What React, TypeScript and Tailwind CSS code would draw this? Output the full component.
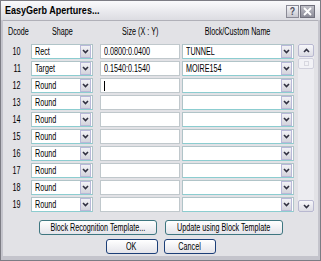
import React from "react";

const F = { fontFamily: '"Liberation Sans", Arial, sans-serif' };

function T({ children, c = "origin-left", s = "scale-x-[0.72]" }: { children: React.ReactNode; c?: string; s?: string }) {
  return <span className={`inline-block whitespace-nowrap ${s} ${c}`}>{children}</span>;
}

function Chevron({ up = false }: { up?: boolean }) {
  return (
    <svg width="7" height="5" viewBox="0 0 7 5">
      <path d={up ? "M1 4 L3.5 1.5 L6 4" : "M1 1 L3.5 3.5 L6 1"} fill="none" stroke="#303040" strokeWidth="1.6" />
    </svg>
  );
}

function ArrowBtn() {
  return (
    <div className="w-[11px] h-[13px] my-auto mr-px border border-[#b8b8d8] bg-gradient-to-b from-[#f2f2f6] to-[#d4d4dc] flex items-center justify-center">
      <Chevron />
    </div>
  );
}

function Combo({ w, text }: { w: string; text: string }) {
  return (
    <div className={`${w} h-[15px] bg-white border border-[#b0c4c8] border-b-[#8ccdd0] flex items-center`}>
      <div className="flex-1 pl-[3px] text-[10px] leading-none overflow-hidden">
        <T>{text}</T>
      </div>
      <ArrowBtn />
    </div>
  );
}

const rows = [
  { d: "10", shape: "Rect", size: "0.0800:0.0400", name: "TUNNEL" },
  { d: "11", shape: "Target", size: "0.1540:0.1540", name: "MOIRE154" },
  { d: "12", shape: "Round", size: "", name: "", caret: true },
  { d: "13", shape: "Round", size: "", name: "" },
  { d: "14", shape: "Round", size: "", name: "" },
  { d: "15", shape: "Round", size: "", name: "" },
  { d: "16", shape: "Round", size: "", name: "" },
  { d: "17", shape: "Round", size: "", name: "" },
  { d: "18", shape: "Round", size: "", name: "" },
  { d: "19", shape: "Round", size: "", name: "" },
];

function Btn({ w, children, def = false }: { w: string; children: React.ReactNode; def?: boolean }) {
  return (
    <div
      className={`${w} h-[15px] rounded-[3px] border ${def ? "border-[#1c3f78]" : "border-[#3e7680]"} bg-gradient-to-b from-[#ffffff] to-[#e4e4ea] flex items-center justify-center text-[10px] leading-none text-black`}
    >
      <T c="origin-center">{children}</T>
    </div>
  );
}

export default function App() {
  return (
    <div style={F} className="w-[321px] h-[261px] bg-[#7c7c84] p-px">
      <div className="w-full h-full bg-[#c4c4cc] px-[2px] pb-[4px] flex flex-col">
        <div className="h-[19px] flex items-center bg-gradient-to-b from-[#fafafc] to-[#dcdce2] -mx-[2px] px-[4px]">
          <div className="flex-1 text-[11px] font-bold leading-none text-black">
            <T s="scale-x-[0.82]">EasyGerb Apertures...</T>
          </div>
          <div className="flex gap-px mr-[1px] mt-[2px]">
            <div className="w-[13px] h-[13px] border border-[#8a8a96] bg-gradient-to-b from-[#f4f4f8] to-[#c8c8d0] flex items-center justify-center text-[11px] font-bold leading-none text-[#505060]">
              <T c="origin-center" s="scale-x-[0.8]">?</T>
            </div>
            <div className="w-[15px] h-[13px] border border-[#70707c] bg-gradient-to-b from-[#c0c0c8] to-[#8c8c98] flex items-center justify-center">
              <svg width="9" height="9" viewBox="0 0 9 9">
                <path d="M1 1 L8 8 M8 1 L1 8" stroke="#ffffff" strokeWidth="1.8" />
              </svg>
            </div>
          </div>
        </div>
        <div className="flex-1 bg-[#e2e2e6] border-t border-[#b0b0b8] flex flex-col text-black">
          <div className="h-[14px] mt-[4px] flex items-center text-[10px] leading-none">
            <div className="w-[28px] pl-[5px]"><T>Dcode</T></div>
            <div className="w-[62px] flex justify-center"><T c="origin-center">Shape</T></div>
            <div className="w-[80px] ml-[7px] flex justify-center"><T c="origin-center">Size (X : Y)</T></div>
            <div className="w-[112px] ml-[2px] flex justify-center"><T c="origin-center">Block/Custom Name</T></div>
          </div>
          <div className="flex mt-[5px]">
            <div className="flex flex-col gap-[2px]">
              {rows.map((r) => (
                <div key={r.d} className="flex h-[15px] items-center">
                  <div className="w-[28px] text-[10px] leading-none flex justify-center">
                    <T c="origin-center">{r.d}</T>
                  </div>
                  <Combo w="w-[62px]" text={r.shape} />
                  <div className="w-[80px] ml-[7px] h-[15px] bg-white border border-[#c0c8cc] flex items-center pl-[3px] text-[10px] leading-none">
                    {r.caret ? <div className="w-px h-[10px] bg-black" /> : <T>{r.size}</T>}
                  </div>
                  <div className="ml-[2px]">
                    <Combo w="w-[112px]" text={r.name} />
                  </div>
                </div>
              ))}
            </div>
            <div className="ml-[4px] w-[16px] h-[168px] bg-[#ececf0] flex flex-col">
              <div className="w-[16px] h-[13px] border border-[#b8b8d0] rounded-[2px] bg-gradient-to-b from-[#f6f6fa] to-[#dcdce4] flex items-center justify-center">
                <Chevron up />
              </div>
              <div className="mt-[1px] w-[16px] h-[11px] border border-[#d0d0dc] rounded-[2px] bg-[#f2f2f6] flex items-center justify-center">
                <div className="w-[5px] h-[5px] border border-[#d8d8e0]" />
              </div>
              <div className="flex-1" />
              <div className="w-[16px] h-[12px] border border-[#b8b8d0] rounded-[2px] bg-gradient-to-b from-[#f6f6fa] to-[#dcdce4] flex items-center justify-center">
                <Chevron />
              </div>
            </div>
          </div>
          <div className="flex justify-center gap-[8px] mt-[8px]">
            <Btn w="w-[118px]">Block Recognition Template...</Btn>
            <Btn w="w-[118px]">Update using Block Template</Btn>
          </div>
          <div className="flex justify-center gap-[6px] mt-[4px]">
            <Btn w="w-[52px]" def>OK</Btn>
            <Btn w="w-[52px]" def>Cancel</Btn>
          </div>
        </div>
      </div>
    </div>
  );
}
